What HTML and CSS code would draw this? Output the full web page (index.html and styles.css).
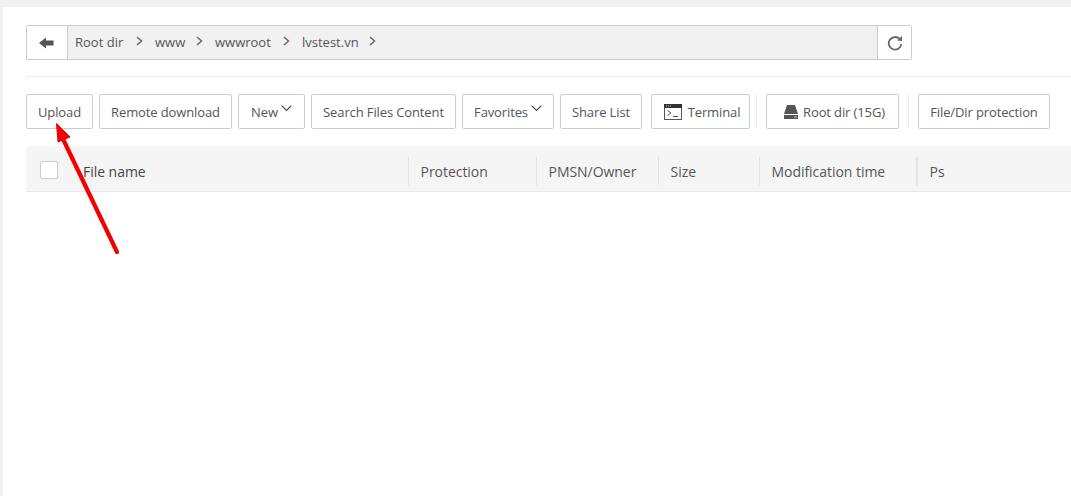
FILE: index.html
```html
<!DOCTYPE html>
<html lang="en">
<head>
<meta charset="utf-8">
<title>File manager</title>
<link rel="stylesheet" href="styles.css">
</head>
<body>
<main class="panel">
  <div class="pathbar">
    <button class="nav-btn back" aria-label="Back">
      <svg width="16" height="12" viewBox="0 0 16 12"><path d="M0 6 7 .5V3.500H14.500V8.500H7V11.500Z" fill="#555"/></svg>
    </button>
    <div class="crumbs">
      <span>Root dir</span><svg class="sep" width="7" height="10" viewBox="0 0 7 10"><path d="M1 1 5.500 5 1 9" fill="none" stroke="#666" stroke-width="1.500"/></svg>
      <span>www</span><svg class="sep" width="7" height="10" viewBox="0 0 7 10"><path d="M1 1 5.500 5 1 9" fill="none" stroke="#666" stroke-width="1.500"/></svg>
      <span>wwwroot</span><svg class="sep" width="7" height="10" viewBox="0 0 7 10"><path d="M1 1 5.500 5 1 9" fill="none" stroke="#666" stroke-width="1.500"/></svg>
      <span>lvstest.vn</span><svg class="sep" width="7" height="10" viewBox="0 0 7 10"><path d="M1 1 5.500 5 1 9" fill="none" stroke="#666" stroke-width="1.500"/></svg>
    </div>
    <button class="nav-btn refresh" aria-label="Refresh">
      <svg width="16" height="16" viewBox="0 0 16 16"><path d="M12.800 4.200A6.300 6.300 0 1 0 14.300 9" fill="none" stroke="#666" stroke-width="1.800"/><path d="M10 5.500 15 6V1Z" fill="#666"/></svg>
    </button>
  </div>
  <div class="toolbar">
    <button class="btn w-upload">Upload</button>
    <button class="btn w-remote">Remote download</button>
    <button class="btn w-new">New<svg class="caret" width="11" height="7" viewBox="0 0 11 7"><path d="M.7.700 5.500 5.500 10.300.700" fill="none" stroke="#444" stroke-width="1.200"/></svg></button>
    <button class="btn w-search">Search Files Content</button>
    <button class="btn w-fav">Favorites<svg class="caret" width="11" height="7" viewBox="0 0 11 7"><path d="M.7.700 5.500 5.500 10.300.700" fill="none" stroke="#444" stroke-width="1.200"/></svg></button>
    <button class="btn w-share">Share List</button>
    <button class="btn w-term">
      <svg width="18" height="16" viewBox="0 0 18 16"><rect x=".5" y=".5" width="17" height="15" fill="#fff" stroke="#555"/><rect width="18" height="4" fill="#333"/><path d="M2 2H3M4 2H5M6 2H7" stroke="#ccc"/><path d="M3.500 6.500 7 9 3.500 11.500" fill="none" stroke="#7a5050"/><path d="M9 12.500H14" stroke="#555"/></svg>
      Terminal
    </button>
    <span class="divider"></span>
    <button class="btn w-root">
      <svg width="14" height="14" viewBox="0 0 14 14"><path d="M3 0H11L14 9H0Z" fill="#555"/><rect y="10" width="14" height="4" fill="#555"/><rect x="10" y="11.500" width="3" height="1" fill="#ccc"/></svg>
      Root dir (15G)
    </button>
    <span class="divider"></span>
    <button class="btn w-prot">File/Dir protection</button>
  </div>
  <div class="thead">
    <div class="cell c-name"><span class="check"></span><span>File name</span></div>
    <div class="cell c-prot">Protection</div>
    <div class="cell c-pmsn">PMSN/Owner</div>
    <div class="cell c-size">Size</div>
    <div class="cell c-time">Modification time</div>
    <div class="cell c-ps">Ps</div>
  </div>
</main>
<svg class="annotation" width="70" height="140" viewBox="0 0 70 140" aria-hidden="true">
  <path d="M62 132 8 19" fill="none" stroke="#f40000" stroke-width="4.200" stroke-linecap="round"/>
  <path d="M1.500 3.500 3 22 15 17Z" fill="#f40000" stroke="#f40000" stroke-linejoin="round"/>
</svg>
</body>
</html>
```
FILE: styles.css
```css
* { box-sizing: border-box; }
html, body { margin: 0; height: 100%; overflow: hidden; }
body {
  background: #f1f1f1;
  padding: 7px 0 0 3px;
  font-family: "Open Sans", "Noto Sans", sans-serif;
  font-size: 13px;
  color: #555;
}
button { font: inherit; color: inherit; background: #fff; cursor: pointer; letter-spacing: -.12px; }
.panel { background: #fff; height: 100%; padding: 18px 0 0 23px; }
.pathbar {
  display: flex;
  width: 886px;
  height: 35px;
  border: 1px solid #ccc;
  border-radius: 2px;
  background: #f1f1f1;
}
.nav-btn { border: 0; padding: 0; display: flex; align-items: center; justify-content: center; flex: none; }
.back { width: 41px; border-right: 1px solid #ccc; }
.refresh { width: 34px; border-left: 1px solid #ccc; }
.crumbs { flex: 1; display: flex; align-items: center; padding: 0 0 2px 7px; color: #555; }
.crumbs span { white-space: nowrap; }
.crumbs span:nth-of-type(1) { width: 50px; }
.crumbs span:nth-of-type(2) { width: 30px; }
.crumbs span:nth-of-type(3) { width: 57px; }
.crumbs span:nth-of-type(4) { width: 56px; }
.sep { margin: -1px 12px 0 11px; }
.toolbar {
  display: flex;
  height: 70px;
  margin-top: 16px;
  padding-top: 17px;
  border-top: 1px solid #eee;
  gap: 6px;
}
.btn {
  height: 35px;
  border: 1px solid #ccc;
  border-radius: 2px;
  padding: 0;
  display: flex;
  align-items: center;
  justify-content: center;
  white-space: nowrap;
  flex: none;
}
.caret { margin: -6px 0 0 3px; }
.w-upload { width: 67px; }
.w-remote { width: 133px; }
.w-new { width: 67px; }
.w-search { width: 145px; }
.w-fav { width: 92px; }
.w-share { width: 82px; }
.w-term { width: 99px; gap: 6px; margin-left: 3px; padding-left: 3px; }
.w-root { width: 133px; gap: 5px; padding-left: 4px; }
.w-prot { width: 132px; }
.divider { width: 1px; height: 35px; background: #eee; margin-right: 3px; flex: none; }
.w-root + .divider { margin-left: 3px; }
.thead {
  display: flex;
  align-items: center;
  height: 46px;
  padding-top: 5px;
  background: #f5f5f5;
  border-bottom: 1px solid #e8e8e8;
  font-size: 14px;
  letter-spacing: -.04px;
}
.cell { padding-left: 11.500px; flex: none; height: 28px; display: flex; align-items: center; border-left: 1px solid #e3e3e3; }
.c-name { width: 382px; padding-left: 14px; border-left: 0; gap: 25px; color: #444; }
.c-prot { width: 128px; }
.c-pmsn { width: 122px; }
.c-size { width: 101px; }
.c-time { width: 157px; }
.c-ps { flex: 1; border-left-width: 2px; }
.check { width: 18px; height: 18px; border: 1px solid #ccc; border-radius: 2px; background: #fff; margin-top: -3px; }
.annotation { position: absolute; left: 55px; top: 120px; }
```
